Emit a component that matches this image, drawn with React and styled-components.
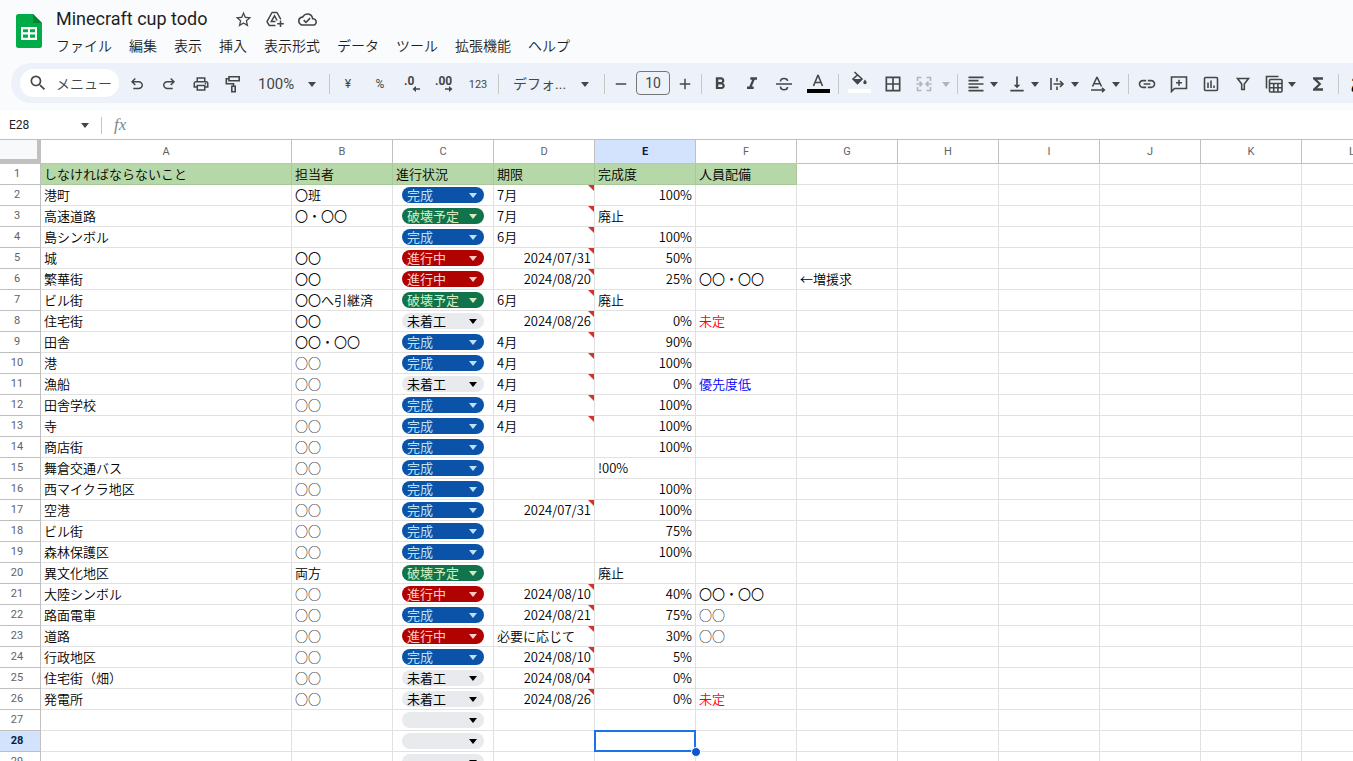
import React from "react";
import styled, { createGlobalStyle, css } from "styled-components";
import {
  MdStarBorder,
  MdOutlineCloudDone,
  MdSearch,
  MdFormatBold,
  MdFormatItalic,
  MdFormatAlignLeft,
  MdVerticalAlignBottom,
  MdLink,
  MdFunctions,
  MdBorderAll,
  MdAdd,
  MdRemove,
} from "react-icons/md";

const GlobalStyle = createGlobalStyle`
  *, *::before, *::after { box-sizing: border-box; }
  html, body { margin: 0; height: 100%; overflow: hidden; background: #fff; }
  body { font-family: Roboto, "Noto Sans CJK JP", sans-serif; color: #1f1f1f; }
  button, input, select { font: inherit; color: inherit; margin: 0; padding: 0; border: 0; background: none; outline: 0; }
`;

const Page = styled.div`
  display: flex;
  flex-direction: column;
  height: 100vh;
`;

const Top = styled.header`
  flex: none;
  background: #f9fbfd;
  padding-bottom: 8px;
`;

const Brand = styled.div`
  display: flex;
  height: 63px;
  padding: 8px 0 0 16px;
`;

const LogoLink = styled.a`
  display: block;
  width: 26px;
  height: 34px;
  margin: 6px 13px 0 0;
`;

const TitleRow = styled.div`
  display: flex;
  align-items: center;
  gap: 12px;
  height: 22px;
`;

const Title = styled.h1`
  margin: 0 14px 0 1px;
  font-size: 18px;
  line-height: 22px;
  font-weight: 400;
`;

const TitleButton = styled.button`
  display: flex;
  align-items: center;
  justify-content: center;
  width: 20px;
  height: 20px;
  color: #444746;
  font-size: 19px;
`;

const MenuBar = styled.nav`
  display: flex;
  gap: 17px;
  padding: 5px 0 0 1px;
`;

const MenuItem = styled.button`
  font-family: "Noto Sans CJK JP", sans-serif;
  font-size: 14px;
  line-height: 20px;
  font-weight: 350;
  white-space: nowrap;
`;

const Toolbar = styled.div`
  display: flex;
  align-items: center;
  gap: 4px;
  height: 40px;
  margin-left: 11px;
  padding: 2px 0 0 9px;
  overflow: hidden;
  border-radius: 20px 0 0 20px;
  background: #edf2fa;
  color: #444746;
  & > * { flex: none; }
`;

const SearchPill = styled.button`
  display: flex;
  align-items: center;
  gap: 8px;
  width: 99px;
  height: 28px;
  margin-bottom: 2px;
  padding-left: 8px;
  border-radius: 14px;
  background: #fff;
  font-family: "Noto Sans CJK JP", sans-serif;
  font-size: 14px;
  line-height: 20px;
  font-weight: 350;
  svg { font-size: 20px; }
`;

const ToolButton = styled.button`
  display: flex;
  align-items: center;
  justify-content: center;
  width: ${(p) => p.$w || 28}px;
  height: 28px;
  font-size: ${(p) => p.$size || 20}px;
  font-weight: 400;
`;

const DropButton = styled.button`
  display: flex;
  align-items: center;
  gap: ${(p) => p.$gap || 3}px;
  width: ${(p) => p.$w || 37}px;
  height: 28px;
  padding-left: 4px;
  opacity: ${(p) => (p.disabled ? 0.35 : 1)};
  font-size: 20px;
`;

const TextDrop = styled.button`
  display: flex;
  align-items: center;
  justify-content: space-between;
  width: ${(p) => p.$w}px;
  height: 28px;
  padding: 0 ${(p) => p.$right}px 0 ${(p) => p.$left}px;
  font-size: ${(p) => p.$size}px;
  line-height: 20px;
`;

const SizeInput = styled.input`
  width: 34px;
  height: 24px;
  margin: 0 -1px 2px;
  border: 1px solid #747775;
  border-radius: 4px;
  text-align: center;
  font-size: 14px;
`;

const Divider = styled.span`
  width: 1px;
  height: ${(p) => p.$h || 20}px;
  background: #c7c7c7;
`;

const ColorButton = styled.button`
  display: flex;
  flex-direction: column;
  align-items: center;
  justify-content: flex-end;
  gap: 2px;
  width: 32px;
  height: 28px;
  padding-bottom: 5px;
  &::after {
    content: "";
    width: 23px;
    height: 4px;
    background: ${(p) => p.$color};
  }
`;

const InputTool = styled.button`
  padding-left: 7px;
  font-size: 18px;
  font-weight: 700;
  color: #000;
`;

const FormulaBar = styled.div`
  flex: none;
  display: flex;
  align-items: center;
  height: 28px;
  padding-left: 9px;
  background: #fff;
  color: #444746;
`;

const NameBox = styled.input`
  width: 71px;
  font-size: 12px;
  color: #1f1f1f;
`;

const NameToggle = styled.button`
  display: flex;
  margin-right: 11px;
`;

const Fx = styled.label`
  margin: 0 8px 0 12px;
  font-family: "Liberation Serif", serif;
  font-style: italic;
  font-size: 17px;
  line-height: 20px;
  color: #80868b;
`;

const FormulaInput = styled.input`
  flex: 1;
`;

const GridArea = styled.main`
  flex: 1;
  min-height: 0;
  overflow: hidden;
  border-top: 1px solid #c0c0c0;
`;

const Sheet = styled.table`
  width: max-content;
  table-layout: fixed;
  border-collapse: separate;
  border-spacing: 0;
`;

const HeadRow = styled.tr`
  height: 24px;
`;

const Corner = styled.th`
  padding: 0;
  background: #f8f9fa;
  border-right: 4px solid #c0c0c0;
  border-bottom: 5px solid #c0c0c0;
`;

const heading = css`
  padding: 0;
  border-right: 1px solid #c0c0c0;
  border-bottom: 1px solid #c0c0c0;
  font-size: 11px;
  text-align: center;
  background: ${(p) => (p.$active ? "#d3e3fd" : "#fff")};
  color: ${(p) => (p.$active ? "#041e49" : "#5f6368")};
  font-weight: ${(p) => (p.$active ? 700 : 400)};
`;

const ColHead = styled.th`
  ${heading}
  line-height: 23px;
`;

const RowHead = styled.th`
  ${heading}
  height: 21px;
  padding-right: 6px;
  line-height: 20px;
`;

const Cell = styled.td`
  position: relative;
  height: 21px;
  padding: 0 3px;
  border-right: 1px solid ${(p) => (p.$head ? "#a9c99b" : "#e1e1e1")};
  border-bottom: 1px solid ${(p) => (p.$head ? "#a9c99b" : "#e1e1e1")};
  background: ${(p) => (p.$head ? "#b6d7a8" : "#fff")};
  color: ${(p) => p.$color || "#000"};
  font-family: "Noto Sans CJK JP", sans-serif;
  font-size: 13px;
  font-weight: 350;
  line-height: 20px;
  text-align: ${(p) => (p.$right ? "right" : "left")};
  white-space: nowrap;
`;

const NoteMark = styled.span`
  position: absolute;
  top: 0;
  right: 0;
  width: 6px;
  height: 6px;
  background: #d93025;
  clip-path: polygon(0 0, 100% 0, 100% 100%);
`;

const tones = {
  完成: ["#0a53a8", "#bfe1f6"],
  破壊予定: ["#11734b", "#d4edbc"],
  進行中: ["#b10202", "#ffcfc9"],
  未着工: ["#e8eaed", "#000"],
  "": ["#e8eaed", "#000"],
};

const Chip = styled.label`
  display: flex;
  align-items: center;
  width: 82px;
  height: 16px;
  margin-left: 6px;
  padding-right: 6px;
  border-radius: 8px;
  background: ${(p) => tones[p.$tone][0]};
  color: ${(p) => tones[p.$tone][1]};
`;

const ChipSelect = styled.select`
  flex: 1;
  min-width: 0;
  height: 16px;
  padding-left: 5px;
  appearance: none;
  font-weight: 400;
  line-height: 16px;
`;

const Selection = styled.div`
  position: absolute;
  inset: -1px;
  z-index: 1;
  border: 2px solid #1a73e8;
  &::after {
    content: "";
    position: absolute;
    right: -7px;
    bottom: -7px;
    width: 10px;
    height: 10px;
    border: 1px solid #fff;
    border-radius: 50%;
    background: #0b57d0;
  }
`;

const Caret = ({ w = 10 }) => (
  <svg width={w} height="5" viewBox="0 0 10 5" fill="currentColor" aria-hidden="true">
    <path d="M1 0h8L5 5z" />
  </svg>
);

const Symbol = ({ d, size = 18 }) => (
  <svg width={size} height={size} viewBox="0 -960 960 960" fill="currentColor" aria-hidden="true">
    <path d={d} />
  </svg>
);

const Line = ({ children, w = 18, h = 18, sw = 1.6 }) => (
  <svg width={w} height={h} viewBox={`0 0 ${w} ${h}`} fill="none" stroke="currentColor" strokeWidth={sw} aria-hidden="true">
    {children}
  </svg>
);

const UNDO =
  "M280-200v-80h284q63 0 109.5-40T720-420q0-60-46.5-100T564-560H312l104 104-56 56-200-200 200-200 56 56-104 104h252q97 0 163.5 63T800-420q0 94-66.5 157T564-200H280Z";
const REDO =
  "M396-200q-97 0-163.5-63T160-420q0-94 66.5-157T396-640h252L544-744l56-56 200 200-200 200-56-56 104-104H396q-63 0-109.5 40T240-420q0 60 46.5 100T396-280h284v80H396Z";
const PRINT =
  "M640-640v-120H320v120h-80v-200h480v200h-80Zm80 180q17 0 28.5-11.5T760-500q0-17-11.5-28.5T720-540q-17 0-28.5 11.5T680-500q0 17 11.5 28.5T720-460Zm-80 260v-160H320v160h320Zm80 80H240v-160H80v-240q0-51 35-85.5t85-34.5h560q51 0 85.5 34.5T880-520v240H720v160Zm80-240v-160q0-17-11.5-28.5T760-560H200q-17 0-28.5 11.5T160-520v160h80v-80h480v80h80Z";

const SheetsLogo = () => (
  <svg width="26" height="34" viewBox="0 0 26 34" aria-hidden="true">
    <path d="M2.500 0H17l9 9v22.500a2.500 2.500 0 0 1-2.500 2.500h-21A2.500 2.500 0 0 1 0 31.500v-29A2.500 2.500 0 0 1 2.500 0z" fill="#00ac47" />
    <path d="M17 0l9 9h-9z" fill="#00832d" />
    <path d="M5 13h16v13H5zM7 15.200v3h5v-3zm7 0v3h5v-3zM7 20.500v3.200h5v-3.200zm7 0v3.200h5v-3.200z" fill="#fff" fillRule="evenodd" />
  </svg>
);

const AddToDrive = () => (
  <Line w={20} h={18} sw={1.5}>
    <path d="M10.500 15.500H4.300L2 11.600L7 2.500h5l3.800 6.800" strokeLinejoin="round" />
    <path d="M10.500 11.500H6.300L9.500 5.800l2.600 4.700" />
    <path d="M15.500 10.500v6.500M12.200 13.800h6.600" />
  </Line>
);

const PaintRoller = () => (
  <Line>
    <path d="M5 1.800h10.200v4H5zM5 3.800H2.300v5h7.200v2M7.800 11.300h3.400v5.400H7.800z" />
  </Line>
);

const Decimal = ({ text, right }) => (
  <svg width="20" height="20" viewBox="0 0 20 20" fill="currentColor" aria-hidden="true">
    <text x={right ? 1 : 2} y="11" fontFamily="Roboto" fontWeight="700" fontSize="12">{text}</text>
    {right ? <path d="M11 14.200h4v-2.200l3.500 3-3.500 3v-2.200h-4z" /> : <path d="M18 14.200h-4v-2.200l-3.500 3 3.500 3v-2.200h4z" />}
  </svg>
);

const Strike = () => (
  <Line w={20} h={20}>
    <path d="M2 10h16M6.500 7.500c0-4 7-4 7-.500M6.500 12.500c0 4.500 7 4 7 .500" />
  </Line>
);

const FillCan = () => (
  <svg width="20" height="16" viewBox="0 0 20 16" aria-hidden="true">
    <path d="M5.500 1l7.500 7-4.500 4.500L4 8l5-4.500" fill="none" stroke="currentColor" strokeWidth="1.600" />
    <path d="M4 8h9l-4.500 4.700z" fill="currentColor" />
    <path d="M16 8.500c1 1.300 1.700 2.200 1.700 3a1.700 1.700 0 0 1-3.400 0c0-.8.700-1.700 1.700-3z" fill="currentColor" />
  </svg>
);

const Merge = () => (
  <Line>
    <path d="M6.500 2.500h-4v3.500M11.500 2.500h4v3.500M6.500 15.500h-4V12M11.500 15.500h4V12M1.500 9h5M4.500 6.500L7 9l-2.500 2.500M16.500 9h-5M13.500 6.500L11 9l2.500 2.500" />
  </Line>
);

const Overflow = () => (
  <Line>
    <path d="M3 3v12M9 3v3.500M9 11.500V15M5.500 9h9M12 6l3 3-3 3" />
  </Line>
);

const Rotate = () => (
  <Line>
    <path d="M3.500 11.500L7.800 2.500h.400l4.300 9M5 8.800h6M2 15h13M13 12.800l2.300 2.200-2.300 2.200" />
  </Line>
);

const Comment = () => (
  <Line>
    <path d="M1.500 16.500V2h15v11.500H4.500zM9 4.700v6M6 7.700h6" />
  </Line>
);

const Chart = () => (
  <Line>
    <rect x="2.500" y="2.500" width="13" height="13" rx="1" />
    <path d="M6 7.500V13M9 5.500V13M12 10.500V13" />
  </Line>
);

const Filter = () => (
  <Line>
    <path d="M3.500 3.500h11L10.300 9v5.500H7.700V9z" />
  </Line>
);

const TableViews = () => (
  <Line>
    <path d="M1.500 13.500v-12h12" />
    <rect x="4.500" y="4.500" width="12.500" height="12.500" rx="1" />
    <path d="M4.500 8.500H17M4.500 12.700H17M8.700 8.500V17M12.900 8.500V17" />
  </Line>
);

const menus = ["ファイル", "編集", "表示", "挿入", "表示形式", "データ", "ツール", "拡張機能", "ヘルプ"];
const columns = "ABCDEFGHIJKL".split("");
const headings = ["しなければならないこと", "担当者", "進行状況", "期限", "完成度", "人員配備"];

// Task, owner, status, deadline, progress, staffing, remark
const tasks = [
  ["港町", "〇班", "完成", "7月", "100%"],
  ["高速道路", "〇・〇〇", "破壊予定", "7月", "廃止"],
  ["島シンボル", "", "完成", "6月", "100%"],
  ["城", "〇〇", "進行中", "2024/07/31", "50%"],
  ["繁華街", "〇〇", "進行中", "2024/08/20", "25%", "〇〇・〇〇", "←増援求"],
  ["ビル街", "〇〇へ引継済", "破壊予定", "6月", "廃止"],
  ["住宅街", "〇〇", "未着工", "2024/08/26", "0%", "未定"],
  ["田舎", "〇〇・〇〇", "完成", "4月", "90%"],
  ["港", "○○", "完成", "4月", "100%"],
  ["漁船", "○○", "未着工", "4月", "0%", "優先度低"],
  ["田舎学校", "○○", "完成", "4月", "100%"],
  ["寺", "○○", "完成", "4月", "100%"],
  ["商店街", "○○", "完成", "", "100%"],
  ["舞倉交通バス", "○○", "完成", "", "!00%"],
  ["西マイクラ地区", "○○", "完成", "", "100%"],
  ["空港", "○○", "完成", "2024/07/31", "100%"],
  ["ビル街", "○○", "完成", "", "75%"],
  ["森林保護区", "○○", "完成", "", "100%"],
  ["異文化地区", "両方", "破壊予定", "", "廃止"],
  ["大陸シンボル", "○○", "進行中", "2024/08/10", "40%", "〇〇・〇〇"],
  ["路面電車", "○○", "完成", "2024/08/21", "75%", "○○"],
  ["道路", "○○", "進行中", "必要に応じて", "30%", "○○"],
  ["行政地区", "○○", "完成", "2024/08/10", "5%"],
  ["住宅街（畑）", "○○", "未着工", "2024/08/04", "0%"],
  ["発電所", "○○", "未着工", "2024/08/26", "0%", "未定"],
  [], [], [],
];

const textColors = { 未定: "#ff0000", 優先度低: "#0000ff" };
const isNumeric = (v) => /^\d+%$|^\d{4}\//.test(v);

function StatusChip({ value, row }) {
  return (
    <Chip $tone={value}>
      <ChipSelect defaultValue={value} aria-label={`進行状況 ${row}`}>
        {Object.keys(tones).map((t) => (
          <option key={t} value={t}>{t}</option>
        ))}
      </ChipSelect>
      <Caret />
    </Chip>
  );
}

function TaskRow({ task, row }) {
  return (
    <tr>
      <RowHead scope="row" $active={row === 28}>{row}</RowHead>
      {columns.map((col, i) => {
        const value = task[i] || "";
        return (
          <Cell key={col} $right={isNumeric(value)} $color={textColors[value]}>
            {col === "C" ? <StatusChip value={value} row={row} /> : value}
            {col === "D" && value && <NoteMark />}
            {col === "E" && row === 28 && <Selection />}
          </Cell>
        );
      })}
    </tr>
  );
}

export default function App() {
  return (
    <Page>
      <GlobalStyle />
      <Top>
        <Brand>
          <LogoLink href="#" aria-label="スプレッドシート ホーム"><SheetsLogo /></LogoLink>
          <div>
            <TitleRow>
              <Title>Minecraft cup todo</Title>
              <TitleButton aria-label="スターを付ける"><MdStarBorder /></TitleButton>
              <TitleButton aria-label="移動"><AddToDrive /></TitleButton>
              <TitleButton aria-label="保存状況"><MdOutlineCloudDone /></TitleButton>
            </TitleRow>
            <MenuBar>
              {menus.map((m) => <MenuItem key={m}>{m}</MenuItem>)}
            </MenuBar>
          </div>
        </Brand>
        <Toolbar role="toolbar">
          <SearchPill><MdSearch />メニュー</SearchPill>
          <ToolButton aria-label="元に戻す"><Symbol d={UNDO} /></ToolButton>
          <ToolButton aria-label="やり直す"><Symbol d={REDO} /></ToolButton>
          <ToolButton aria-label="印刷"><Symbol d={PRINT} /></ToolButton>
          <ToolButton aria-label="書式を貼り付け"><PaintRoller /></ToolButton>
          <TextDrop $w={74} $left={7} $right={8} $size={15}>100%<Caret /></TextDrop>
          <Divider />
          <ToolButton $size={12}>¥</ToolButton>
          <ToolButton $size={12}>%</ToolButton>
          <ToolButton aria-label="小数点以下を減らす"><Decimal text=".0" /></ToolButton>
          <ToolButton aria-label="小数点以下を増やす"><Decimal text=".00" right /></ToolButton>
          <ToolButton $size={11} $w={32}>123</ToolButton>
          <Divider />
          <TextDrop $w={97} $left={10} $right={10} $size={14}>デフォ...<Caret /></TextDrop>
          <Divider />
          <ToolButton $w={24} $size={18} aria-label="縮小"><MdRemove /></ToolButton>
          <SizeInput defaultValue="10" aria-label="フォントサイズ" />
          <ToolButton $w={24} $size={18} aria-label="拡大"><MdAdd /></ToolButton>
          <Divider />
          <ToolButton aria-label="太字"><MdFormatBold /></ToolButton>
          <ToolButton aria-label="斜体"><MdFormatItalic /></ToolButton>
          <ToolButton aria-label="取り消し線"><Strike /></ToolButton>
          <ColorButton $color="#000" aria-label="テキストの色">
            <Line w={14} h={13}><path d="M2.500 12L6.800 1.500h.400L11.500 12M4 8.500h6" /></Line>
          </ColorButton>
          <Divider />
          <ColorButton $color="#fff" aria-label="塗りつぶしの色"><FillCan /></ColorButton>
          <ToolButton aria-label="枠線"><MdBorderAll /></ToolButton>
          <DropButton $w={42} $gap={8} disabled aria-label="セルを結合"><Merge /><Caret /></DropButton>
          <Divider />
          <DropButton aria-label="水平方向の配置"><MdFormatAlignLeft /><Caret /></DropButton>
          <DropButton aria-label="垂直方向の配置"><MdVerticalAlignBottom /><Caret /></DropButton>
          <DropButton $gap={4} aria-label="折り返し"><Overflow /><Caret /></DropButton>
          <DropButton $w={39} $gap={4} aria-label="回転"><Rotate /><Caret /></DropButton>
          <Divider />
          <ToolButton aria-label="リンク"><MdLink /></ToolButton>
          <ToolButton aria-label="コメント"><Comment /></ToolButton>
          <ToolButton aria-label="グラフ"><Chart /></ToolButton>
          <ToolButton aria-label="フィルタ"><Filter /></ToolButton>
          <DropButton $gap={4} aria-label="表示"><TableViews /><Caret /></DropButton>
          <ToolButton $w={32} aria-label="関数"><MdFunctions /></ToolButton>
          <Divider />
          <InputTool>あ</InputTool>
        </Toolbar>
      </Top>
      <FormulaBar>
        <NameBox defaultValue="E28" aria-label="名前ボックス" />
        <NameToggle aria-label="名前付き範囲"><Caret /></NameToggle>
        <Divider $h={17} />
        <Fx htmlFor="formula">fx</Fx>
        <FormulaInput id="formula" />
      </FormulaBar>
      <GridArea>
        <Sheet>
          <colgroup>
            <col style={{ width: 41 }} />
            {columns.map((c) => <col key={c} style={{ width: c === "A" ? 251 : 101 }} />)}
          </colgroup>
          <thead>
            <HeadRow>
              <Corner aria-label="すべて選択" />
              {columns.map((c) => <ColHead key={c} scope="col" $active={c === "E"}>{c}</ColHead>)}
            </HeadRow>
          </thead>
          <tbody>
            <tr>
              <RowHead scope="row">1</RowHead>
              {columns.map((c, i) => <Cell key={c} $head={i < headings.length}>{headings[i]}</Cell>)}
            </tr>
            {tasks.map((t, i) => <TaskRow key={i} task={t} row={i + 2} />)}
          </tbody>
        </Sheet>
      </GridArea>
    </Page>
  );
}
